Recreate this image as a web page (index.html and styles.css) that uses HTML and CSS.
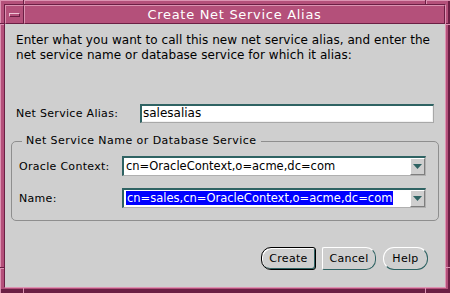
FILE: index.html
```html
<!DOCTYPE html>
<html>
<head>
<meta charset="utf-8">
<title>Create Net Service Alias</title>
<link rel="stylesheet" href="styles.css">
</head>
<body>
<div class="window">
  <span class="tick tick-v tick-tl"></span>
  <span class="tick tick-v tick-tr"></span>
  <span class="tick tick-v tick-bl"></span>
  <span class="tick tick-v tick-br"></span>
  <span class="tick tick-h tick-lt"></span>
  <span class="tick tick-h tick-lb"></span>
  <span class="tick tick-h tick-rt"></span>
  <span class="tick tick-h tick-rb"></span>
  <div class="client">
    <div class="titlebar">
      <div class="menu-btn"><span class="menu-glyph"></span></div>
      <div class="title">Create Net Service Alias</div>
    </div>
    <div class="content">
      <p class="intro">Enter what you want to call this new net service alias, and enter the<br>net service name or database service for which it alias:</p>
      <div class="row alias-row">
        <span class="label alias-label">Net Service Alias:</span>
        <div class="field">salesalias</div>
      </div>
      <fieldset class="group">
        <legend class="legend">Net Service Name or Database Service</legend>
        <div class="row group-row first">
          <span class="label group-label">Oracle Context:</span>
          <div class="combo">
            <div class="combo-text">cn=OracleContext,o=acme,dc=com</div>
            <div class="combo-btn"><svg width="9" height="5" viewBox="0 0 9 5"><path d="M0 0H9L4.5 5Z" fill="#2f6363"/></svg></div>
          </div>
        </div>
        <div class="row group-row">
          <span class="label group-label">Name:</span>
          <div class="combo">
            <div class="combo-text"><span class="sel">cn=sales,cn=OracleContext,o=acme,dc=com</span></div>
            <div class="combo-btn"><svg width="9" height="5" viewBox="0 0 9 5"><path d="M0 0H9L4.5 5Z" fill="#2f6363"/></svg></div>
          </div>
        </div>
      </fieldset>
      <div class="buttons">
        <button class="btn btn-create">Create</button>
        <button class="btn btn-cancel">Cancel</button>
        <button class="btn btn-help">Help</button>
      </div>
    </div>
  </div>
</div>
</body>
</html>
```
FILE: styles.css
```css
html, body {
  margin: 0;
  padding: 0;
  background: #b4507a;
}

.window {
  position: relative;
  box-sizing: border-box;
  width: 450px;
  height: 293px;
  padding: 4px 4px 5px 4px;
  background: #b4507a;
  box-shadow: inset 1px 1px 0 #dc93b2, inset -2px -4px 0 #6b1f44;
  display: flex;
}

.tick {
  position: absolute;
  display: block;
}
.tick-v {
  width: 1px;
  height: 4px;
  background: #6b1f44;
  box-shadow: 1px 0 0 #dc93b2;
}
.tick-h {
  width: 4px;
  height: 1px;
  background: #6b1f44;
  box-shadow: 0 1px 0 #dc93b2;
}
.tick-tl { left: 23px; top: 0; }
.tick-tr { left: 425px; top: 0; }
.tick-bl { left: 23px; bottom: 0; height: 5px; background: #dc93b2; box-shadow: none; }
.tick-br { left: 425px; bottom: 0; height: 5px; background: #dc93b2; box-shadow: none; }
.tick-lt { left: 0; top: 23px; }
.tick-lb { left: 0; top: 267px; }
.tick-rt { right: 0; top: 23px; }
.tick-rb { right: 0; top: 267px; background: #dc93b2; box-shadow: none; }

.client {
  flex: 1;
  display: flex;
  flex-direction: column;
  border: 1px solid;
  border-color: #6b1f44 #dc93b2 #dc93b2 #6b1f44;
}

.titlebar {
  height: 19px;
  display: flex;
  flex: none;
}

.menu-btn {
  box-sizing: border-box;
  width: 19px;
  height: 19px;
  background: #b4507a;
  border: 1px solid;
  border-color: #dc93b2 #6b1f44 #6b1f44 #dc93b2;
  display: flex;
  align-items: center;
  justify-content: center;
}

.menu-glyph {
  box-sizing: border-box;
  width: 11px;
  height: 4px;
  border: 1px solid;
  border-color: #f0c4d6 #6b1f44 #6b1f44 #f0c4d6;
  background: #b4507a;
}

.title {
  flex: 1;
  box-sizing: border-box;
  height: 19px;
  border: 1px solid;
  border-color: #dc93b2 #6b1f44 #6b1f44 #dc93b2;
  color: #ffffff;
  font-family: "DejaVu Sans", sans-serif;
  font-size: 13px;
  line-height: 17px;
  text-align: center;
  letter-spacing: 0.7px;
}

.content {
  flex: 1;
  background: #cfcfcf;
  padding: 9px 6px 0 6px;
  display: flex;
  flex-direction: column;
  font-family: "DejaVu Sans", sans-serif;
  font-size: 11px;
  color: #000000;
}

.intro {
  margin: 0;
  padding-left: 5px;
  line-height: 15px;
  font-size: 12px;
  letter-spacing: 0.05px;
}

.row {
  display: flex;
  align-items: center;
}

.alias-row {
  margin-top: 41px;
  padding-left: 5px;
}

.label {
  font-size: 11px;
  letter-spacing: 0.3px;
}

.alias-label {
  width: 124px;
}

.field {
  box-sizing: border-box;
  width: 294px;
  height: 19px;
  background: #ffffff;
  border-style: solid;
  border-width: 2px 1px 1px 2px;
  border-color: #2f6363 #a8a8a8 #a8a8a8 #2f6363;
  box-shadow: inset -1px -1px 0 #f2f2f2;
  padding-left: 1px;
  font-size: 12px;
  line-height: 15px;
}

.group {
  margin: 11px 0 0 0;
  padding: 0 12px 12px 7px;
  border: 1px solid #8e8e8e;
  border-radius: 5px;
  min-width: 0;
}

.legend {
  margin-left: 3px;
  padding: 0 4px;
  line-height: 14px;
  font-size: 11px;
  letter-spacing: 0.45px;
}

.group-row {
  margin-top: 12px;
}
.group-row.first {
  margin-top: 8px;
}

.group-label {
  width: 103px;
}

.combo {
  box-sizing: border-box;
  width: 304px;
  height: 20px;
  display: flex;
  background: #ffffff;
  border-style: solid;
  border-width: 2px 1px 1px 2px;
  border-color: #2f6363 #b0b0b0 #b0b0b0 #2f6363;
}

.combo-text {
  flex: 1;
  padding-left: 2px;
  font-size: 11.5px;
  line-height: 16px;
  white-space: nowrap;
  overflow: hidden;
}

.sel {
  background: #0000ff;
  color: #ffffff;
  padding: 0 1px;
}

.combo-btn {
  box-sizing: border-box;
  width: 15px;
  height: 17px;
  background: #cfcfcf;
  border: 1px solid;
  border-color: #ffffff #7e7e7e #7e7e7e #ffffff;
  display: flex;
  align-items: center;
  justify-content: center;
}

.buttons {
  margin-top: 26px;
  margin-right: 11px;
  display: flex;
  justify-content: flex-end;
  gap: 6px;
}

.btn {
  box-sizing: border-box;
  height: 23px;
  padding: 0;
  background: #cfcfcf;
  font-family: "DejaVu Sans", sans-serif;
  font-size: 11px;
  color: #000000;
  letter-spacing: 0.3px;
  border: 1px solid;
  border-color: #ffffff #2f6363 #2f6363 #ffffff;
}

.btn-create {
  width: 55px;
  border-color: #000000;
  border-radius: 10px 3px 3px 10px;
  box-shadow: inset 1px 1px 0 #ffffff, inset -1px -1px 0 #2f6363;
}

.btn-cancel {
  width: 54px;
  border-radius: 2px 10px 10px 2px;
}

.btn-help {
  width: 45px;
  margin-left: 1px;
  border-radius: 11px;
}
```
